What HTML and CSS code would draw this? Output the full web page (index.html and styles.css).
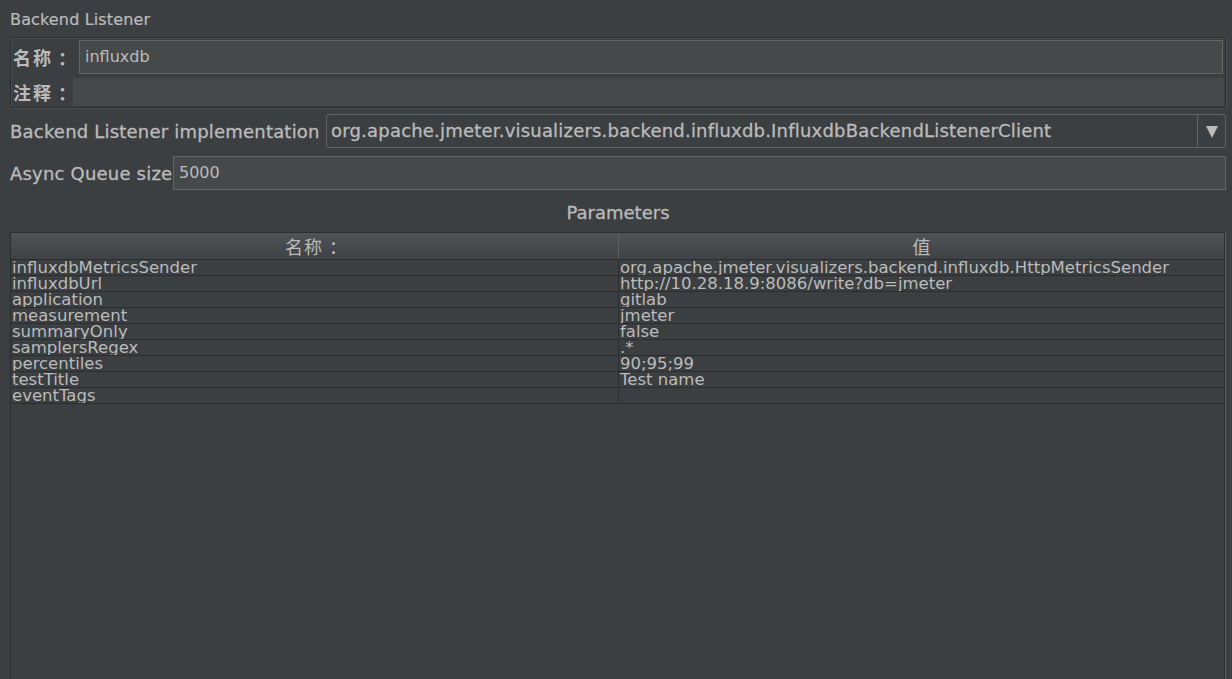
FILE: index.html
```html
<!DOCTYPE html>
<html lang="zh">
<head>
<meta charset="utf-8">
<title>Backend Listener</title>
<link rel="stylesheet" href="styles.css">
</head>
<body>
<div class="page">
  <div class="title">Backend Listener</div>
  <div class="name-panel">
    <div class="row name-row">
      <span class="cjk-label lbl-name">名称<span class="colon">：</span></span>
      <div class="field name-field">influxdb</div>
    </div>
    <div class="row comment-row">
      <span class="cjk-label lbl-comment">注释<span class="colon">：</span></span>
      <div class="textarea"></div>
    </div>
  </div>
  <div class="form-row impl-row">
    <span class="label impl-label">Backend Listener implementation</span>
    <div class="combo">
      <span class="combo-text">org.apache.jmeter.visualizers.backend.influxdb.InfluxdbBackendListenerClient</span>
      <span class="combo-arrow"><svg width="12" height="12" viewBox="0 0 12 12"><polygon points="0,0 12,0 6,12" fill="#bbbbbb"/></svg></span>
    </div>
  </div>
  <div class="form-row queue-row">
    <span class="label queue-label">Async Queue size</span>
    <div class="field queue-field">5000</div>
  </div>
  <div class="section-title">Parameters</div>
  <div class="table-wrap">
    <div class="grid">
      <div class="thead">
        <div class="th th-name">名称<span class="th-colon">：</span></div>
        <div class="th">值</div>
      </div>
      <div class="tr"><div class="td">influxdbMetricsSender</div><div class="td">org.apache.jmeter.visualizers.backend.influxdb.HttpMetricsSender</div></div>
      <div class="tr"><div class="td">influxdbUrl</div><div class="td">http://10.28.18.9:8086/write?db=jmeter</div></div>
      <div class="tr"><div class="td">application</div><div class="td">gitlab</div></div>
      <div class="tr"><div class="td">measurement</div><div class="td">jmeter</div></div>
      <div class="tr"><div class="td">summaryOnly</div><div class="td">false</div></div>
      <div class="tr"><div class="td">samplersRegex</div><div class="td">.*</div></div>
      <div class="tr"><div class="td">percentiles</div><div class="td">90;95;99</div></div>
      <div class="tr"><div class="td">testTitle</div><div class="td">Test name</div></div>
      <div class="tr"><div class="td">eventTags</div><div class="td"></div></div>
    </div>
  </div>
</div>
</body>
</html>
```
FILE: styles.css
```css
html, body {
  margin: 0;
  padding: 0;
  height: 100%;
  background: #3c3f41;
  overflow: hidden;
}

body {
  font-family: "DejaVu Sans", "Noto Sans CJK SC", sans-serif;
  color: #bbbbbb;
}

.page {
  height: 679px;
  box-sizing: border-box;
  padding: 0 6px 0 10px;
  display: flex;
  flex-direction: column;
}

.title {
  flex: none;
  height: 37px;
  line-height: 39px;
  font-size: 16px;
  letter-spacing: 0.15px;
  -webkit-text-stroke: 0.2px #bbbbbb;
  white-space: nowrap;
}

.name-panel {
  flex: none;
  height: 71px;
  box-sizing: border-box;
  border: 1px solid #2b2d2f;
  box-shadow: inset 1px 1px 0 #4a4d4f, 1px 1px 0 #4a4d4f;
  padding: 2px 1px 1px 1px;
  display: flex;
  flex-direction: column;
  gap: 4px;
}

.row {
  display: flex;
  align-items: center;
}

.name-row {
  height: 34px;
}

.comment-row {
  height: 28px;
}

.cjk-label {
  flex: none;
  font-family: "Noto Sans CJK SC", sans-serif;
  font-weight: 700;
  font-size: 18px;
  letter-spacing: 2px;
  padding-left: 1px;
  white-space: nowrap;
}

.colon {
  margin-left: 5px;
  margin-right: -14px;
}

.lbl-name {
  width: 66px;
}

.lbl-comment {
  width: 60px;
}

.field {
  flex: 1;
  height: 34px;
  box-sizing: border-box;
  border: 1px solid #646464;
  background: #45494a;
  font-size: 16px;
  line-height: 32px;
  padding-left: 5px;
  white-space: nowrap;
}

.name-field {
  margin-right: 1px;
}

.textarea {
  flex: 1;
  height: 28px;
  background: #45494a;
}

.form-row {
  flex: none;
  display: flex;
  align-items: center;
  height: 34px;
}

.impl-row {
  margin-top: 6px;
}

.queue-row {
  margin-top: 8px;
}

.label {
  flex: none;
  font-size: 18px;
  letter-spacing: 0.2px;
  -webkit-text-stroke: 0.3px #bbbbbb;
  white-space: nowrap;
}

.impl-label {
  width: 316px;
}

.queue-label {
  width: 163px;
}

.combo {
  flex: 1;
  height: 34px;
  box-sizing: border-box;
  border: 1px solid #646464;
  border-radius: 3px;
  display: flex;
}

.combo-text {
  flex: 1;
  font-size: 18px;
  letter-spacing: 0.2px;
  -webkit-text-stroke: 0.3px #bbbbbb;
  line-height: 32px;
  padding-left: 4px;
  white-space: nowrap;
  overflow: hidden;
}

.combo-arrow {
  flex: none;
  width: 28px;
  box-sizing: border-box;
  border-left: 1px solid #646464;
  display: flex;
  align-items: center;
  justify-content: center;
  padding-top: 2px;
}

.queue-field {
  padding-left: 5px;
}

.section-title {
  flex: none;
  height: 42px;
  line-height: 45px;
  text-align: center;
  font-size: 18px;
  -webkit-text-stroke: 0.3px #bbbbbb;
}

.table-wrap {
  flex: 1;
  min-height: 0;
  border-left: 1px solid #2b2d2f;
  border-top: 1px solid #2b2d2f;
  border-right: 1px solid #5e6163;
}

.grid {
  height: 100%;
  box-sizing: border-box;
  border-right: 1px solid #2b2d2f;
}

.thead {
  display: grid;
  grid-template-columns: 608px 1fr;
  height: 27px;
  box-sizing: border-box;
  background: linear-gradient(#505355, #3f4244);
  border-bottom: 1px solid #2b2d2f;
}

.th {
  font-family: "Noto Sans CJK SC", sans-serif;
  font-size: 18px;
  line-height: 26px;
  text-align: center;
}

.th-name {
  letter-spacing: 1px;
  padding-left: 4px;
}

.th-colon {
  margin-left: 6px;
}

.th:first-child {
  border-right: 1px solid #5d6062;
}

.tr {
  display: grid;
  grid-template-columns: 608px 1fr;
  height: 16px;
  box-sizing: border-box;
  border-bottom: 1px solid #2b2d2f;
}

.td {
  font-size: 16.5px;
  line-height: 15px;
  padding-left: 1px;
  white-space: nowrap;
  overflow: hidden;
}

.td:first-child {
  border-right: 1px solid #2b2d2f;
}
```
